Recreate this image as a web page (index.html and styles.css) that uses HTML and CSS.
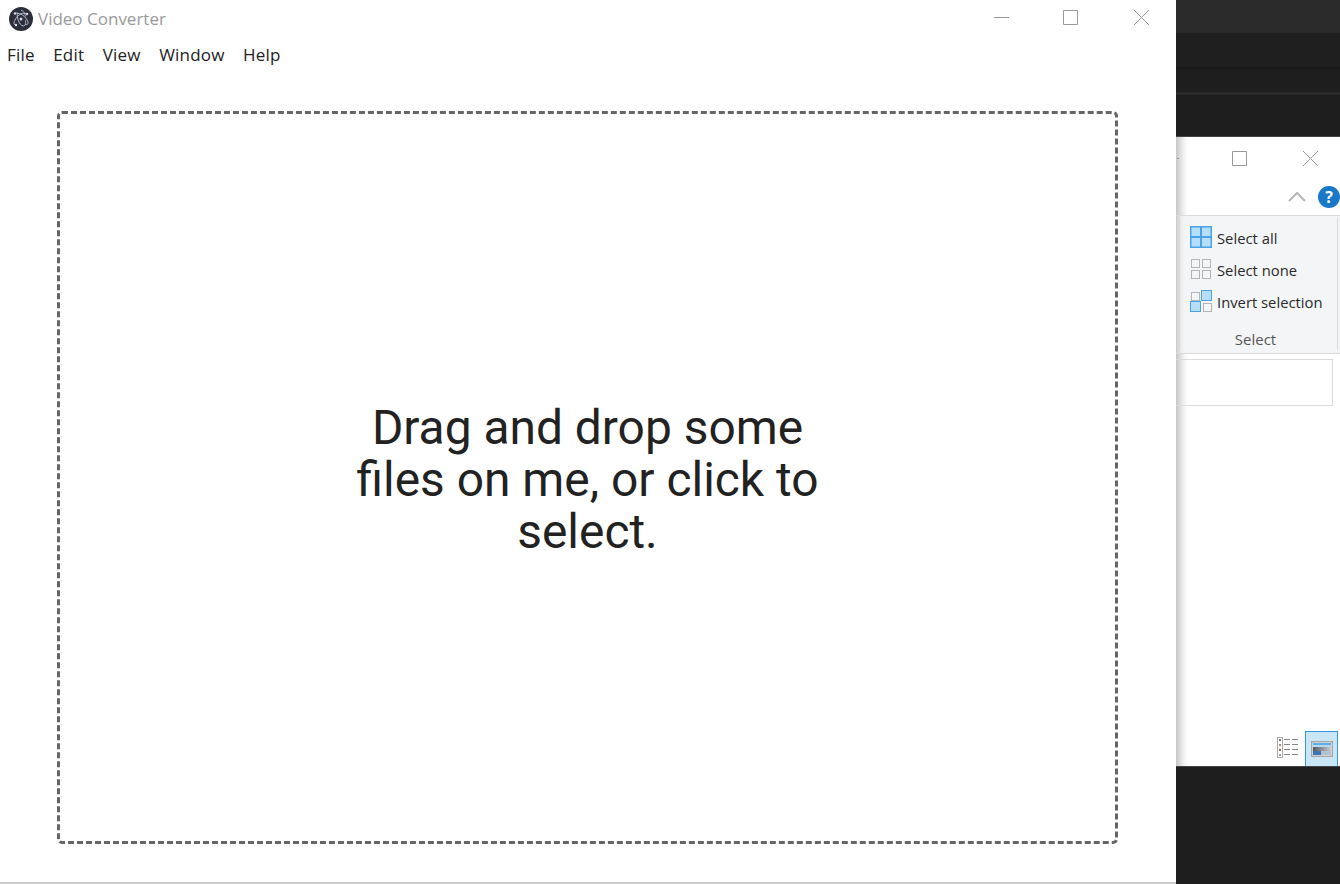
FILE: index.html
```html
<!DOCTYPE html>
<html>
<head>
<meta content="text/html; charset=UTF-8" http-equiv="content-type"/>
<title>Video Converter</title>
<link rel="stylesheet" href="styles.css">
</head>
<body>
  <div class="screen">
    <div class="app">
      <div class="titlebar">
        <svg class="logo" width="24" height="24" viewBox="0 0 24 24">
          <circle cx="12" cy="12" r="12" fill="#2b2e3b"/>
          <g fill="none" stroke="#b9bec8" stroke-width="1">
            <path d="M6 6.500c3-1.500 9 1 12 6.500 2 3.500 1 5-1.500 4.500"/>
            <path d="M17.500 7c-3-2-8 0-11 5-2 3.500-2 6 .5 6"/>
            <path d="M8.500 6c-1 4 1.500 12 5.500 13 2 .5 3-2.500 2.500-5.500"/>
            <path d="M12 3.500c2.500 0 4 3 4.500 6"/>
          </g>
          <g fill="#d5d9e0">
            <circle cx="12" cy="12" r="1.500"/>
            <circle cx="6" cy="6.500" r="1.200"/>
            <circle cx="18" cy="7" r="1.200"/>
            <circle cx="7" cy="18" r="1.200"/>
          </g>
        </svg>
        <span class="app-name">Video Converter</span>
        <div class="win-btns">
          <svg width="16" height="16" viewBox="0 0 16 16"><path d="M1 8.500h15" stroke="#999" fill="none"/></svg>
          <svg width="16" height="16" viewBox="0 0 16 16"><path d="M1.500 1.500h14v14h-14z" stroke="#999" fill="none"/></svg>
          <svg class="win-close" width="16" height="16" viewBox="0 0 16 16"><path d="M1 1l15 15M16 1L1 16" stroke="#999" fill="none"/></svg>
        </div>
      </div>
      <ul class="menu">
        <li>File</li>
        <li>Edit</li>
        <li>View</li>
        <li>Window</li>
        <li>Help</li>
      </ul>
      <div class="dropzone">
        <p>Drag and drop some files on me, or click to select.</p>
      </div>
    </div>

    <div class="behind">
      <div class="dark-top">
        <div class="band band-a"></div>
        <div class="band band-b"></div>
        <div class="band band-c"></div>
        <div class="band band-d"></div>
      </div>
      <div class="explorer">
        <div class="ex-title">
          <div class="ex-stub"></div>
          <svg width="16" height="16" viewBox="0 0 16 16"><path d="M1.500 1.500h14v14h-14z" stroke="#999" fill="none"/></svg>
          <svg class="ex-close" width="16" height="16" viewBox="0 0 16 16"><path d="M1 1l15 15M16 1L1 16" stroke="#999" fill="none"/></svg>
        </div>
        <div class="ex-tabs">
          <svg width="18" height="10" viewBox="0 0 18 10"><path d="M1 9l8-8 8 8" stroke="#b5b5b5" stroke-width="2" fill="none"/></svg>
          <span class="help">?</span>
        </div>
        <div class="ribbon">
          <div class="group">
            <div class="cmd">
              <svg width="24" height="24" viewBox="0 0 24 24">
                <rect x="0" y="0" width="22" height="22" fill="#4aa3e6"/>
                <g fill="#b5defa">
                  <rect x="1.500" y="1.500" width="8.500" height="8.500"/>
                  <rect x="12" y="1.500" width="8.500" height="8.500"/>
                  <rect x="1.500" y="12" width="8.500" height="8.500"/>
                  <rect x="12" y="12" width="8.500" height="8.500"/>
                </g>
              </svg>
              <span>Select all</span>
            </div>
            <div class="cmd">
              <svg width="24" height="24" viewBox="0 0 24 24">
                <g fill="#f4f5f7" stroke="#b4b4b4">
                  <rect x="1.500" y="1.500" width="8" height="8"/>
                  <rect x="12.500" y="1.500" width="8" height="8"/>
                  <rect x="1.500" y="12.500" width="8" height="8"/>
                  <rect x="12.500" y="12.500" width="8" height="8"/>
                </g>
              </svg>
              <span>Select none</span>
            </div>
            <div class="cmd">
              <svg width="24" height="24" viewBox="0 0 24 24">
                <g fill="#f4f5f7" stroke="#b4b4b4">
                  <rect x="1.500" y="2.500" width="8" height="8"/>
                  <rect x="13.500" y="13.500" width="8" height="8"/>
                </g>
                <g fill="#b5defa" stroke="#4aa3e6">
                  <rect x="11.500" y=".5" width="10" height="10"/>
                  <rect x=".5" y="11.500" width="10" height="10"/>
                </g>
              </svg>
              <span>Invert selection</span>
            </div>
            <div class="group-name">Select</div>
          </div>
        </div>
        <div class="search-box"></div>
        <div class="views">
          <svg class="view-list" width="22" height="22" viewBox="0 0 22 22">
            <rect x=".5" y=".5" width="5" height="20" fill="#fff" stroke="#aaa"/>
            <path d="M2 2h2v2H2z" fill="#5b7f9b"/>
            <path d="M2 7h2v2H2z" fill="#a98f66"/>
            <path d="M2 12h2v2H2z" fill="#a5643c"/>
            <path d="M2 17h2v2H2z" fill="#7fa4c0"/>
            <path d="M7 2.500h6M15 2.500h6M7 7.500h6M15 7.500h6M7 12.500h6M15 12.500h6M7 17.500h6M15 17.500h6" stroke="#888" fill="none"/>
          </svg>
          <div class="view-on">
            <svg width="22" height="16" viewBox="0 0 22 16">
              <defs>
                <linearGradient id="hill">
                  <stop offset="0" stop-color="#55585f"/>
                  <stop offset="1" stop-color="#c4ccd4"/>
                </linearGradient>
              </defs>
              <rect x=".75" y=".75" width="20.500" height="14.500" fill="#fff" stroke="#a6a6a6" stroke-width="1.500"/>
              <rect x="2" y="2" width="18" height="2" fill="#5aaeea"/>
              <rect x="2" y="4" width="18" height="2" fill="#b8d8f0"/>
              <rect x="2" y="6" width="18" height="4" fill="url(#hill)"/>
              <rect x="2" y="10" width="8" height="4" fill="#3c74b4"/>
              <rect x="10" y="10" width="10" height="4" fill="#b4c2cf"/>
            </svg>
          </div>
        </div>
      </div>
      <div class="dark-bottom"></div>
    </div>
  </div>
</body>
</html>
```

FILE: styles.css
```css
* {
  margin: 0;
  padding: 0;
  box-sizing: border-box;
}

body {
  background: #1e1e1e;
  overflow: hidden;
}

.screen {
  display: flex;
  width: 1340px;
  height: 884px;
}

/* the app window */
.app {
  flex: none;
  width: 1176px;
  height: 884px;
  background: #fff;
  display: flex;
  flex-direction: column;
  border-bottom: 2px solid #ccc;
  font-family: "Open Sans", sans-serif;
}

.titlebar {
  display: flex;
  align-items: center;
  height: 36px;
  padding-left: 9px;
}

.logo {
  margin: 1px 5px 0 0;
}

.app-name {
  font-size: 17px;
  color: #9a9a9a;
}

.win-btns {
  margin-left: auto;
  display: flex;
  gap: 53px;
  padding: 0 27px 2px 0;
}

.win-close {
  margin-left: 2px;
}

.menu {
  display: flex;
  gap: 18.5px;
  height: 39px;
  padding: 7px 0 0 7px;
  list-style: none;
  font-size: 17px;
  letter-spacing: .2px;
  line-height: 24px;
  color: #222;
}

.dropzone {
  margin: 36px 58px 38px 57px;
  flex: 1;
  border: 3px dashed #666;
  border-radius: 5px;
  display: flex;
  align-items: center;
  justify-content: center;
}

.dropzone p {
  width: 480px;
  margin-top: 4px;
  text-align: center;
  font-family: Roboto, sans-serif;
  font-size: 47.9px;
  line-height: 52px;
  color: #222;
}

/* whatever is open behind it */
.behind {
  flex: none;
  width: 164px;
  overflow: hidden;
  display: flex;
  flex-direction: column;
  font-family: "Open Sans", sans-serif;
}

.dark-top {
  height: 136px;
  background: #1e1e1e;
}

.band-a {
  height: 33px;
  background: #2a2a2a;
}

.band-b {
  height: 34px;
  background: #1f1f1f;
}

.band-c {
  height: 25px;
  background: #1e1e1e;
  border-top: 2px solid #1a1a1a;
}

.band-d {
  height: 3px;
  background: #2a2a2a;
}

.explorer {
  height: 631px;
  background: #fff;
  border-top: 1px solid #444;
  border-bottom: 1px solid #444;
  display: flex;
  flex-direction: column;
  box-shadow: inset 12px 0 10px -8px #bbb;
}

.ex-title {
  display: flex;
  height: 41px;
  padding: 13px 22px 0 0;
}

.ex-stub {
  width: 2px;
  height: 1px;
  margin: 8px auto 0 1px;
  background: #999;
}

.ex-close {
  margin-left: 55px;
}

.ex-tabs {
  display: flex;
  justify-content: flex-end;
  align-items: center;
  gap: 12px;
  height: 38px;
  border-bottom: 1px solid #dadbdc;
}

.help {
  width: 22px;
  height: 22px;
  border-radius: 50%;
  background: #1a78c8;
  color: #fff;
  font-size: 16px;
  font-weight: 700;
  line-height: 22px;
  text-align: center;
}

.ribbon {
  height: 138px;
  padding: 2px 2px 0 3px;
  background: #f4f5f7;
  border-bottom: 1px solid #dadbdc;
  box-shadow: inset 8px 0 6px -6px #bbb;
}

.group {
  height: 132px;
  border-left: 1px solid #dadbdc;
  border-right: 1px solid #dadbdc;
  padding: 4px 0 0 10px;
}

.cmd {
  display: flex;
  align-items: center;
  gap: 3px;
  height: 32px;
  font-size: 14.8px;
  color: #2a2a2a;
}

.group-name {
  margin-top: 11px;
  padding-right: 16px;
  text-align: center;
  font-size: 15px;
  color: #555;
}

.search-box {
  width: 157px;
  height: 47px;
  margin-top: 5px;
  border: 1px solid #dadbdc;
  border-left: none;
}

.views {
  margin-top: auto;
  display: flex;
  align-items: center;
  justify-content: flex-end;
  gap: 6px;
  padding-right: 2px;
}

.view-list {
  margin-bottom: 1px;
}

.view-on {
  width: 33px;
  height: 35px;
  background: #c9e6f7;
  border: 1px solid #3a96dd;
  border-bottom: none;
  display: flex;
  align-items: center;
  justify-content: center;
}

.dark-bottom {
  flex: 1;
  background: #1e1e1e;
}
```
